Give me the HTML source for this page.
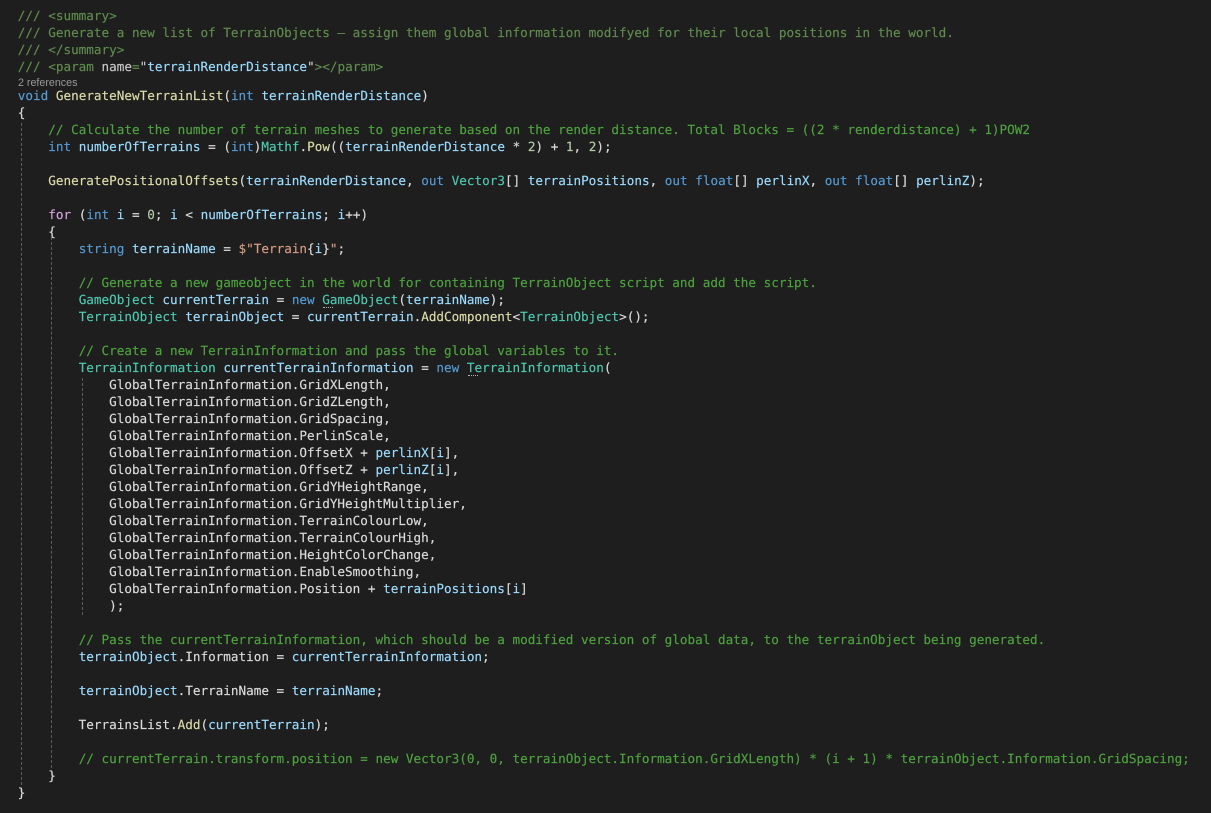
<!DOCTYPE html>
<html>
<head>
<meta charset="utf-8">
<style>
html,body{margin:0;padding:0;width:1211px;height:813px;background:#1e1e1e;overflow:hidden}
pre{position:absolute;left:17.8px;margin:0;font-family:"DejaVu Sans Mono","Liberation Mono",monospace;font-size:12.65px;line-height:17px;color:#dcdcdc;white-space:pre;text-rendering:geometricPrecision;-webkit-text-stroke:0.15px currentColor}
.c{color:#4ea33f}.d{color:#608b4e}.k{color:#569cd6}.v{color:#9cdcfe}.t{color:#4ec9b0}.m{color:#dcdcaa}.s{color:#d69d85}.n{color:#b5cea8}.p{color:#d8a0df}
.g{position:absolute;width:0;border-left:1px dashed #5e5e5e}
.o{position:absolute;width:10px;height:0;border-top:1px dotted #b0b0b0}
#r{position:absolute;left:18px;top:77px;font:10.7px/12px "Liberation Sans",sans-serif;color:#999}
</style>
</head>
<body>
<div class="g" style="left:21px;top:123px;height:662px"></div>
<div class="g" style="left:51px;top:237px;height:531px"></div>
<div class="g" style="left:82px;top:378px;height:237px"></div>
<pre style="top:7px"><span class="d">/// &lt;summary&gt;
/// Generate a new list of TerrainObjects – assign them global information modifyed for their local positions in the world.
/// &lt;/summary&gt;
/// &lt;param </span><span style="color:#c8c8c8">name</span><span class="d">=</span><span style="color:#c8c8c8">"</span><span class="v">terrainRenderDistance</span><span style="color:#c8c8c8">"</span><span class="d">&gt;&lt;/param&gt;</span></pre>
<div id="r">2 references</div>
<pre style="top:87px"><span class="k">void</span> <span class="m">GenerateNewTerrainList</span>(<span class="k">int</span> <span class="v">terrainRenderDistance</span>)
{
    <span class="c">// Calculate the number of terrain meshes to generate based on the render distance. Total Blocks = ((2 * renderdistance) + 1)POW2</span>
    <span class="k">int</span> <span class="v">numberOfTerrains</span> = (<span class="k">int</span>)<span class="t">Mathf</span>.<span class="m">Pow</span>((<span class="v">terrainRenderDistance</span> * <span class="n">2</span>) + <span class="n">1</span>, <span class="n">2</span>);

    <span class="m">GeneratePositionalOffsets</span>(<span class="v">terrainRenderDistance</span>, <span class="k">out</span> <span class="t">Vector3</span>[] <span class="v">terrainPositions</span>, <span class="k">out</span> <span class="k">float</span>[] <span class="v">perlinX</span>, <span class="k">out</span> <span class="k">float</span>[] <span class="v">perlinZ</span>);

    <span class="p">for</span> (<span class="k">int</span> <span class="v">i</span> = <span class="n">0</span>; <span class="v">i</span> &lt; <span class="v">numberOfTerrains</span>; <span class="v">i</span>++)
    {
        <span class="k">string</span> <span class="v">terrainName</span> = <span class="s">$"Terrain</span>{<span class="v">i</span>}<span class="s">"</span>;

        <span class="c">// Generate a new gameobject in the world for containing TerrainObject script and add the script.</span>
        <span class="t">GameObject</span> <span class="v">currentTerrain</span> = <span class="k">new</span> <span class="t">GameObject</span>(<span class="v">terrainName</span>);
        <span class="t">TerrainObject</span> <span class="v">terrainObject</span> = <span class="v">currentTerrain</span>.<span class="m">AddComponent</span>&lt;<span class="t">TerrainObject</span>&gt;();

        <span class="c">// Create a new TerrainInformation and pass the global variables to it.</span>
        <span class="t">TerrainInformation</span> <span class="v">currentTerrainInformation</span> = <span class="k">new</span> <span class="t">TerrainInformation</span>(
            GlobalTerrainInformation.GridXLength,
            GlobalTerrainInformation.GridZLength,
            GlobalTerrainInformation.GridSpacing,
            GlobalTerrainInformation.PerlinScale,
            GlobalTerrainInformation.OffsetX + <span class="v">perlinX</span>[<span class="v">i</span>],
            GlobalTerrainInformation.OffsetZ + <span class="v">perlinZ</span>[<span class="v">i</span>],
            GlobalTerrainInformation.GridYHeightRange,
            GlobalTerrainInformation.GridYHeightMultiplier,
            GlobalTerrainInformation.TerrainColourLow,
            GlobalTerrainInformation.TerrainColourHigh,
            GlobalTerrainInformation.HeightColorChange,
            GlobalTerrainInformation.EnableSmoothing,
            GlobalTerrainInformation.Position + <span class="v">terrainPositions</span>[<span class="v">i</span>]
            );

        <span class="c">// Pass the currentTerrainInformation, which should be a modified version of global data, to the terrainObject being generated.</span>
        <span class="v">terrainObject</span>.Information = <span class="v">currentTerrainInformation</span>;

        <span class="v">terrainObject</span>.TerrainName = <span class="v">terrainName</span>;

        TerrainsList.<span class="m">Add</span>(<span class="v">currentTerrain</span>);

        <span class="c">// currentTerrain.transform.position = new Vector3(0, 0, terrainObject.Information.GridXLength) * (i + 1) * terrainObject.Information.GridSpacing;</span>
    }
}</pre>
<div class="o" style="left:323px;top:307px"></div>
<div class="o" style="left:468px;top:375px"></div>
</body>
</html>
